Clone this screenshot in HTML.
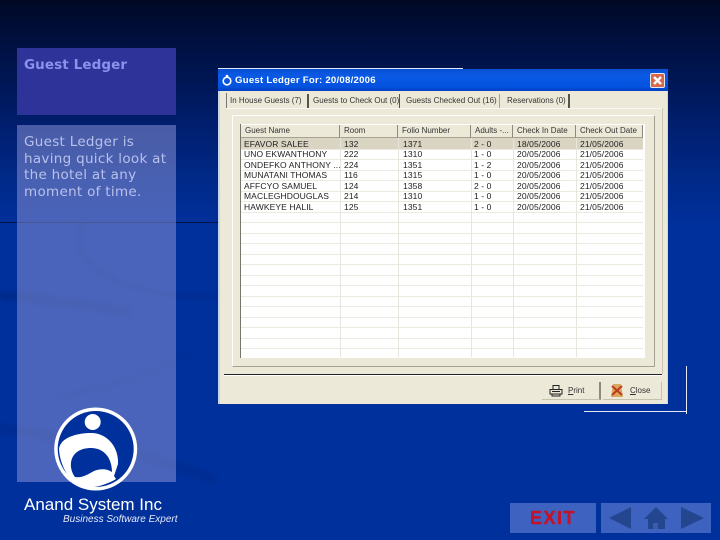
<!DOCTYPE html>
<html><head><meta charset="utf-8"><style>
html,body{margin:0;padding:0}
#p{position:relative;width:720px;height:540px;overflow:hidden;background:linear-gradient(180deg,#000824 0,#001040 8%,#001f70 24%,#002a8a 34%,#00309c 42%,#00309c 100%);font-family:"Liberation Sans",sans-serif}
.a{position:absolute}
.t{position:absolute;white-space:nowrap;font-size:8.5px;color:#222;line-height:10px;letter-spacing:.1px}
.tb{position:absolute;white-space:nowrap;font-size:8px;color:#333;line-height:10px;top:96px}
.ln{position:absolute;height:1px;background:#ebe9e0;left:241px;width:402px}
.v{position:absolute;width:1px;background:#e8e6dc;top:138px;height:219px}
.h{position:absolute;top:125px;height:13px;background:#ece9d8;border-right:1px solid #8d8b7d;border-bottom:1px solid #a5a294;box-sizing:border-box;font-size:8px;color:#333;line-height:12px;padding-left:4px;white-space:nowrap}
</style></head><body><div id="p">
<svg class="a" style="left:0;top:0;filter:blur(1.5px)" width="720" height="540" viewBox="0 0 720 540" fill="none">
<path d="M83 223C72 250 85 270 130 285C165 297 190 296 215 298" stroke="#00287f" stroke-width="4" opacity=".4"/>
<path d="M0 295C50 300 90 305 130 312" stroke="#00257a" stroke-width="9" opacity=".45"/>
<path d="M60 395C110 390 160 370 195 350" stroke="#002a88" stroke-width="3" opacity=".3"/>
<path d="M0 428C70 438 150 455 215 480" stroke="#00287f" stroke-width="10" opacity=".3"/>
</svg>
<div class="a" style="left:0;top:222px;width:218px;height:1px;background:#00124a"></div>
<div class="a" style="left:17px;top:48px;width:159px;height:67px;background:#2d3398"></div>
<div class="a" style="left:17px;top:125px;width:159px;height:357px;background:rgba(130,140,210,.56)"></div>
<div class="a" style="left:24px;top:57px;font:bold 13.5px/16px 'DejaVu Sans',sans-serif;color:#8a92ec;white-space:nowrap;letter-spacing:.1px">Guest Ledger</div>
<div class="a" style="left:24px;top:134px;width:150px;font:13.5px/16.5px 'DejaVu Sans',sans-serif;color:#b8c1ec;letter-spacing:.3px;white-space:nowrap">Guest Ledger is<br>having quick look at<br>the hotel at any<br>moment of time.</div>

<svg class="a" style="left:52px;top:406px" width="88" height="86" viewBox="0 0 88 86">
<circle cx="43.700" cy="43" r="41.500" fill="#fff"/><circle cx="43.700" cy="43" r="38" fill="#00309c"/>
<circle cx="40.700" cy="16" r="8" fill="#fff"/>
<path d="M7 43C8 32 24 27 39 27C56 27 67 42 66 58L62 70L64 73C56 78 44 82 32 82C18 78 8 60 7 43Z" fill="#fff"/>
<path d="M23 71C15 60 18 42 39 42C52 42 60 52 60 66C54 62 47 63 42 65C35 69 30 72 23 71Z" fill="#00309c"/>
</svg>
<div class="a" style="left:24px;top:496px;font-size:17px;line-height:18px;color:#fff;white-space:nowrap">Anand System Inc</div>
<div class="a" style="left:63px;top:514px;font-size:10px;line-height:12px;font-style:italic;color:#e4e8f8;white-space:nowrap">Business Software Expert</div>

<div class="a" style="left:218px;top:68px;width:245px;height:1px;background:#dfe8f6"></div>
<div class="a" style="left:686px;top:366px;width:1px;height:48px;background:#e6eaf6"></div>
<div class="a" style="left:584px;top:411px;width:103px;height:1px;background:#e6eaf6"></div>

<div class="a" style="left:218px;top:69px;width:450px;height:335px;background:#ece9d8"></div>
<div class="a" style="left:218px;top:69px;width:450px;height:22px;background:linear-gradient(180deg,#0a4fd0,#0a5ae6 30%,#0353e0 80%,#0240c0)"></div>
<div class="a" style="left:218px;top:91px;width:2px;height:313px;background:#c5d6ee"></div>
<div class="a" style="left:667px;top:91px;width:1px;height:313px;background:#c5d6ee"></div>
<svg class="a" style="left:221px;top:74px" width="12" height="12" viewBox="0 0 12 12" fill="none"><circle cx="6" cy="7" r="3.800" stroke="#fff" stroke-width="1.600"/><circle cx="6" cy="2" r="1.300" fill="#fff"/></svg>
<div class="a" style="left:235px;top:75px;font:bold 9.6px/12px 'Liberation Sans',sans-serif;color:#fff;white-space:nowrap;letter-spacing:.25px">Guest Ledger For: 20/08/2006</div>
<div class="a" style="left:650px;top:73px;width:15px;height:15px;background:#d9684a;border:1px solid #e8e8f0;box-sizing:border-box;border-radius:2px"></div>
<svg class="a" style="left:650px;top:73px" width="15" height="15"><path d="M4 4L11 11M11 4L4 11" stroke="#fff" stroke-width="2.400"/></svg>

<!-- tabs -->
<div class="tb" style="left:230px">In House Guests (7)</div>
<div class="tb" style="left:313px">Guests to Check Out (0)</div>
<div class="tb" style="left:406px">Guests Checked Out (16)</div>
<div class="tb" style="left:507px">Reservations (0)</div>
<div class="a" style="left:226px;top:93px;width:1px;height:15px;background:#777"></div>
<div class="a" style="left:307px;top:94px;width:2px;height:14px;background:#55544c"></div>
<div class="a" style="left:399px;top:94px;width:1px;height:14px;background:#55544c"></div>
<div class="a" style="left:499px;top:94px;width:1px;height:14px;background:#a5a294"></div>
<div class="a" style="left:568px;top:94px;width:2px;height:14px;background:#55544c"></div>
<div class="a" style="left:226px;top:108px;width:436px;height:1px;background:#f8f7f0"></div>
<div class="a" style="left:662px;top:108px;width:1px;height:266px;background:#c9c6b4"></div>

<!-- panel -->
<div class="a" style="left:232px;top:115px;width:423px;height:252px;border:1px solid #fff;border-right:1px solid #a5a294;border-bottom:1px solid #a5a294;box-sizing:border-box"></div>
<div class="a" style="left:240px;top:124px;width:405px;height:234px;background:#fff;border-left:1px solid #77766c;box-sizing:border-box"></div>
<div class="h" style="left:241px;width:99px">Guest Name</div>
<div class="h" style="left:340px;width:58px">Room</div>
<div class="h" style="left:398px;width:73px">Folio Number</div>
<div class="h" style="left:471px;width:42px">Adults -...</div>
<div class="h" style="left:513px;width:63px">Check In Date</div>
<div class="h" style="left:576px;width:67px">Check Out Date</div>
<div class="a" style="left:241px;top:138px;width:402px;height:11px;background:#d9d5c2"></div>
<div class="ln" style="top:149px"></div><div class="ln" style="top:159px"></div><div class="ln" style="top:170px"></div><div class="ln" style="top:180px"></div><div class="ln" style="top:191px"></div><div class="ln" style="top:201px"></div><div class="ln" style="top:212px"></div><div class="ln" style="top:222px"></div><div class="ln" style="top:233px"></div><div class="ln" style="top:243px"></div><div class="ln" style="top:254px"></div><div class="ln" style="top:264px"></div><div class="ln" style="top:275px"></div><div class="ln" style="top:285px"></div><div class="ln" style="top:296px"></div><div class="ln" style="top:306px"></div><div class="ln" style="top:317px"></div><div class="ln" style="top:327px"></div><div class="ln" style="top:338px"></div><div class="ln" style="top:348px"></div>
<div class="v" style="left:340px"></div><div class="v" style="left:398px"></div><div class="v" style="left:471px"></div><div class="v" style="left:513px"></div><div class="v" style="left:576px"></div>

<div class="t" style="left:244px;top:139px">EFAVOR SALEE</div><div class="t" style="left:344px;top:139px">132</div><div class="t" style="left:403px;top:139px">1371</div><div class="t" style="left:474px;top:139px">2 - 0</div><div class="t" style="left:517px;top:139px">18/05/2006</div><div class="t" style="left:580px;top:139px">21/05/2006</div>
<div class="t" style="left:244px;top:149px">UNO EKWANTHONY</div><div class="t" style="left:344px;top:149px">222</div><div class="t" style="left:403px;top:149px">1310</div><div class="t" style="left:474px;top:149px">1 - 0</div><div class="t" style="left:517px;top:149px">20/05/2006</div><div class="t" style="left:580px;top:149px">21/05/2006</div>
<div class="t" style="left:244px;top:160px">ONDEFKO ANTHONY ...</div><div class="t" style="left:344px;top:160px">224</div><div class="t" style="left:403px;top:160px">1351</div><div class="t" style="left:474px;top:160px">1 - 2</div><div class="t" style="left:517px;top:160px">20/05/2006</div><div class="t" style="left:580px;top:160px">21/05/2006</div>
<div class="t" style="left:244px;top:170px">MUNATANI THOMAS</div><div class="t" style="left:344px;top:170px">116</div><div class="t" style="left:403px;top:170px">1315</div><div class="t" style="left:474px;top:170px">1 - 0</div><div class="t" style="left:517px;top:170px">20/05/2006</div><div class="t" style="left:580px;top:170px">21/05/2006</div>
<div class="t" style="left:244px;top:181px">AFFCYO SAMUEL</div><div class="t" style="left:344px;top:181px">124</div><div class="t" style="left:403px;top:181px">1358</div><div class="t" style="left:474px;top:181px">2 - 0</div><div class="t" style="left:517px;top:181px">20/05/2006</div><div class="t" style="left:580px;top:181px">21/05/2006</div>
<div class="t" style="left:244px;top:191px">MACLEGHDOUGLAS</div><div class="t" style="left:344px;top:191px">214</div><div class="t" style="left:403px;top:191px">1310</div><div class="t" style="left:474px;top:191px">1 - 0</div><div class="t" style="left:517px;top:191px">20/05/2006</div><div class="t" style="left:580px;top:191px">21/05/2006</div>
<div class="t" style="left:244px;top:202px">HAWKEYE HALIL</div><div class="t" style="left:344px;top:202px">125</div><div class="t" style="left:403px;top:202px">1351</div><div class="t" style="left:474px;top:202px">1 - 0</div><div class="t" style="left:517px;top:202px">20/05/2006</div><div class="t" style="left:580px;top:202px">21/05/2006</div>

<div class="a" style="left:224px;top:374px;width:438px;height:1px;background:#222"></div>
<div class="a" style="left:224px;top:375px;width:438px;height:1px;background:#fff"></div>
<div class="a" style="left:542px;top:382px;width:59px;height:18px;border-right:2px solid #8d8b7d;border-bottom:1px solid #c5c2b0;box-sizing:border-box"></div>
<div class="a" style="left:603px;top:382px;width:59px;height:18px;border-right:1px solid #c5c2b0;border-bottom:1px solid #c5c2b0;box-sizing:border-box"></div>
<svg class="a" style="left:549px;top:384px" width="14" height="13" viewBox="0 0 14 13" fill="none" stroke="#222"><path d="M4 5V1.500H10V5M1 5.500H13V10H1ZM3 10V12H11V10"/><path d="M3 7.500H11"/></svg>
<svg class="a" style="left:610px;top:384px" width="14" height="13" viewBox="0 0 14 13"><path d="M3 0H11L13 13H1Z" fill="#d9a860"/><path d="M2 2L12 11M12 2L2 11" stroke="#c0391c" stroke-width="2"/></svg>
<div class="tb" style="left:568px;top:386px"><u>P</u>rint</div>
<div class="tb" style="left:630px;top:386px"><u>C</u>lose</div>

<!-- nav -->
<div class="a" style="left:510px;top:503px;width:86px;height:30px;background:#3d62c0"></div>
<div class="a" style="left:601px;top:503px;width:110px;height:30px;background:#3d62c0"></div>
<div class="a" style="left:510px;top:503px;width:86px;height:30px;text-align:center;font:bold 18px/30px 'Liberation Sans',sans-serif;color:#c4122a;letter-spacing:1.500px;-webkit-text-stroke:.4px #c4122a">EXIT</div>
<svg class="a" style="left:601px;top:503px" width="110" height="30" viewBox="0 0 110 30"><path d="M8 15L30 4V26Z" fill="#23468f"/><path d="M80 4L103 15L80 26Z" fill="#23468f"/><path d="M43 16L55 4L67 16H64V26H47V16Z" fill="#23468f"/><rect x="52" y="20" width="5" height="6" fill="#3a5cae"/></svg>
</div></body></html>
